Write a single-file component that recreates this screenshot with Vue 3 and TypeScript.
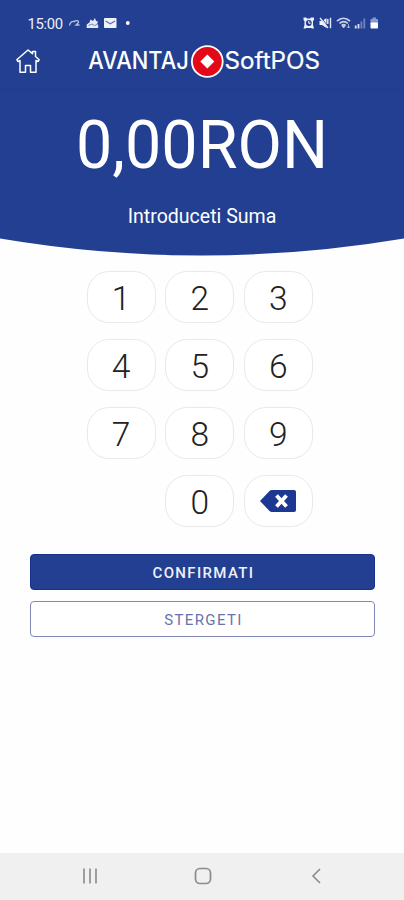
<script setup lang="ts">
type Key = { id: string; label?: string; kind: 'digit' | 'blank' | 'erase' }

const keys: Key[] = [
  ...['1', '2', '3', '4', '5', '6', '7', '8', '9'].map((d): Key => ({ id: d, label: d, kind: 'digit' })),
  { id: 'blank', kind: 'blank' },
  { id: '0', label: '0', kind: 'digit' },
  { id: 'erase', kind: 'erase' },
]
</script>

<template>
  <main class="screen">
    <header class="header">
      <div class="status">
        <span class="clock">15:00</span>
        <svg class="status-left" width="66" height="14" viewBox="0 0 66 14" fill="none">
          <path d="M1.500 9.500C2 6 4.500 4.500 7 5.800M6 5.500C8 4 11 4.500 10.500 6.500L8 9H11.500" stroke="#b8c2e2" stroke-width="1.300" />
          <path d="M18.700 12V8.500L21.500 6.500L22.500 3.500L25 5L27 2L28 5L30 5.500L29 8L30.200 9V12Z" fill="#e6eaf7" />
          <path d="M20.500 9.500L24 8L26.500 9.500L29 8.500" stroke="#6f82bd" />
          <rect x="36" y="2" width="12.500" height="10" rx=".800" fill="#f0f2fa" />
          <path d="M37.500 5L42.300 7.800L47 5" stroke="#5d72b4" stroke-width="1.200" />
          <circle cx="59.800" cy="7" r="1.900" fill="#fff" />
        </svg>
        <svg class="status-right" width="78" height="14" viewBox="0 0 78 14" fill="none">
          <path d="M1.500 1.500H4L5 2.500H8L9 1.500H12V4L11 5V9L12 12.500H10L9 12H4.500L3.500 12.500H1.500L2.500 9V5L1.500 4Z" fill="#eef1fa" />
          <circle cx="6.800" cy="7" r="2.900" fill="#233f91" />
          <path d="M6.800 5V7.300H8.500" stroke="#fff" />
          <path d="M17.500 5H20L24.500 2V12L20 9H17.500Z" fill="#eef1fa" />
          <path d="M19 1.500L27 11.500" stroke="#233f91" />
          <path d="M18 2L26 12M25.800 3V8M28.500 1.800V12.300" stroke="#e2e7f5" stroke-width="1.400" />
          <path d="M35 5.200C39 1.300 44 1.300 48 5.200M37.500 7.500C40 5 43.500 5 45.800 7.500M39.700 9.600C41 8.400 42.500 8.400 43.500 9.600" stroke="#c9d1ea" stroke-width="1.700" />
          <path d="M41.600 12L39.900 9.800H43.300ZM46.500 8V12M45.200 10.700L46.500 12L47.800 10.700" fill="#c9d1ea" stroke="#c9d1ea" stroke-width=".700" />
          <path d="M53.700 9.500V12.500M56.500 8V12.500" stroke="#dce2f3" stroke-width="1.800" />
          <path d="M59.400 5.500V12.500M62.300 2.500V12.500" stroke="#7184c0" stroke-width="1.800" />
          <path d="M68.500 3H70.500V1.500H74V3H76V7H68.500Z" fill="#8999cb" />
          <rect x="68.500" y="6.500" width="7.500" height="6" rx=".800" fill="#fff" />
        </svg>
      </div>

      <div class="brand-bar">
        <svg class="home" width="26" height="26" viewBox="0 0 26 26" fill="none" stroke="#fff" stroke-width="1.500" stroke-linejoin="round">
          <path d="M5 12.500V24.200H10.500V17.500H15.500V24.200H21V12.500L23 13.500L24.200 11.700L20.500 8.500V3.500H17.500V5.700L13 2L1.800 11.700L3 13.500Z" />
        </svg>
        <svg class="logo" width="236" height="36" viewBox="0 0 236 36">
          <text class="logo-name" x="2.300" y="26" textLength="100.500" lengthAdjust="spacingAndGlyphs">AVANTAJ</text>
          <circle cx="121.300" cy="18.500" r="16.300" fill="#fff" />
          <circle cx="121.300" cy="18.500" r="14.500" fill="#e30919" />
          <path d="M121.300 11.500L128.300 18.500L121.300 25.500L114.300 18.500Z" fill="#fff" />
          <text class="logo-product" x="138.500" y="26" textLength="95.500" lengthAdjust="spacingAndGlyphs">SoftPOS</text>
        </svg>
      </div>

      <div class="amount">0,00RON</div>
      <div class="caption">Introduceti Suma</div>
    </header>
    <svg class="curve" viewBox="0 0 404 18" width="404" height="18">
      <path d="M0 0H404V.500Q202 34.500 0 .500Z" fill="#233f91" />
    </svg>

    <section class="keypad">
      <template v-for="key in keys" :key="key.id">
        <span v-if="key.kind === 'blank'"></span>
        <button v-else class="key" :class="key.kind" type="button">
          <template v-if="key.kind === 'digit'">{{ key.label }}</template>
          <svg v-else width="38" height="24" viewBox="0 0 38 24">
            <path d="M1 12L10.500 2Q11.500 1 13 1H35Q37 1 37 3V21Q37 23 35 23H13Q11.500 23 10.500 22Z" fill="#1c3892" />
            <path d="M17.500 6.500L27.500 17.500M27.500 6.500L17.500 17.500" stroke="#fff" stroke-width="3.800" />
          </svg>
        </button>
      </template>
    </section>

    <section class="actions">
      <button class="action primary" type="button">CONFIRMATI</button>
      <button class="action outline" type="button">STERGETI</button>
    </section>

    <nav class="system-nav">
      <svg width="16" height="16" viewBox="0 0 16 16" stroke="#8b8b8b" stroke-width="1.600">
        <path d="M2 .500V15.500M8 .500V15.500M14 .500V15.500" />
      </svg>
      <svg width="18" height="18" viewBox="0 0 18 18" fill="none" stroke="#8b8b8b" stroke-width="1.700">
        <rect x="1.500" y="1.500" width="15" height="15" rx="4.500" />
      </svg>
      <svg width="16" height="16" viewBox="0 0 16 16" fill="none" stroke="#8b8b8b" stroke-width="1.600">
        <path d="M12 1L5 8L12 15" />
      </svg>
    </nav>
  </main>
</template>

<style>
body {
  background: #fff;
}
</style>

<style scoped>
.screen {
  display: flex;
  flex-direction: column;
  width: 404px;
  height: 900px;
  background: #fefefe;
  font-family: Roboto, 'Liberation Sans', sans-serif;
  overflow: hidden;
}
svg {
  display: block;
  flex: none;
}
button {
  box-sizing: border-box;
  margin: 0;
  padding: 0;
  font-family: inherit;
}
.header {
  display: flex;
  flex-direction: column;
  flex: none;
  height: 238px;
  background: linear-gradient(#233f91 87px, #223c8e 88px, #233f91 92px);
  color: #fff;
}
.status {
  display: flex;
  align-items: center;
  height: 14px;
  padding: 16px 24px 0 27.5px;
}
.clock {
  width: 36.5px;
  font-size: 14.8px;
  line-height: 14px;
  letter-spacing: -0.3px;
  padding-top: 1px;
  color: #edf0fa;
}
.status-left {
  margin-left: 4px;
}
.status-right {
  margin-left: auto;
}
.brand-bar {
  display: flex;
  align-items: center;
  height: 36px;
  margin-top: 13px;
  padding-left: 15px;
}
.logo {
  margin-left: 45px;
}
.logo-name,
.logo-product {
  font-family: Inter, Roboto, sans-serif;
  font-size: 23.8px;
  font-weight: 500;
  fill: #fff;
}
.logo-product {
  font-weight: 400;
  stroke: #fff;
  stroke-width: 0.2px;
}
.amount {
  margin-top: 28px;
  font-size: 67px;
  line-height: 77px;
  text-align: center;
  transform: scaleX(0.965);
}
.caption {
  margin-top: 20px;
  font-size: 20.5px;
  line-height: 24px;
  text-align: center;
  transform: scaleX(0.953);
}
.curve {
  width: 404px;
  margin-top: -0.5px;
}
.keypad {
  display: grid;
  grid-template-columns: repeat(3, 69px);
  grid-auto-rows: 52px;
  column-gap: 9.7px;
  row-gap: 16px;
  margin: 15.5px 0 0 86.5px;
}
.key {
  display: flex;
  align-items: center;
  justify-content: center;
  border: 1.5px solid #e9e9e9;
  border-radius: 22px;
  background: #fff;
  color: #222;
  font-size: 33.5px;
  font-weight: 300;
  line-height: 46px;
}
.digit {
  padding-top: 4px;
}
.actions {
  display: flex;
  flex-direction: column;
  gap: 10.5px;
  padding: 0 29px 0 30px;
  margin-top: 27px;
}
.action {
  height: 36px;
  padding: 1px 0 0 2px;
  border: 1px solid #15318b;
  border-radius: 4px;
  font-size: 15px;
  letter-spacing: 1.35px;
}
.primary {
  background: #233f91;
  color: #eef1fa;
  font-weight: 500;
}
.outline {
  padding-top: 2px;
  background: #fff;
  border-color: #8288b4;
  color: #6873ab;
}
.system-nav {
  display: flex;
  align-items: center;
  justify-content: space-between;
  box-sizing: border-box;
  height: 47px;
  margin-top: auto;
  padding: 0 80px 1px 82px;
  background: #f0f0f0;
}
</style>
